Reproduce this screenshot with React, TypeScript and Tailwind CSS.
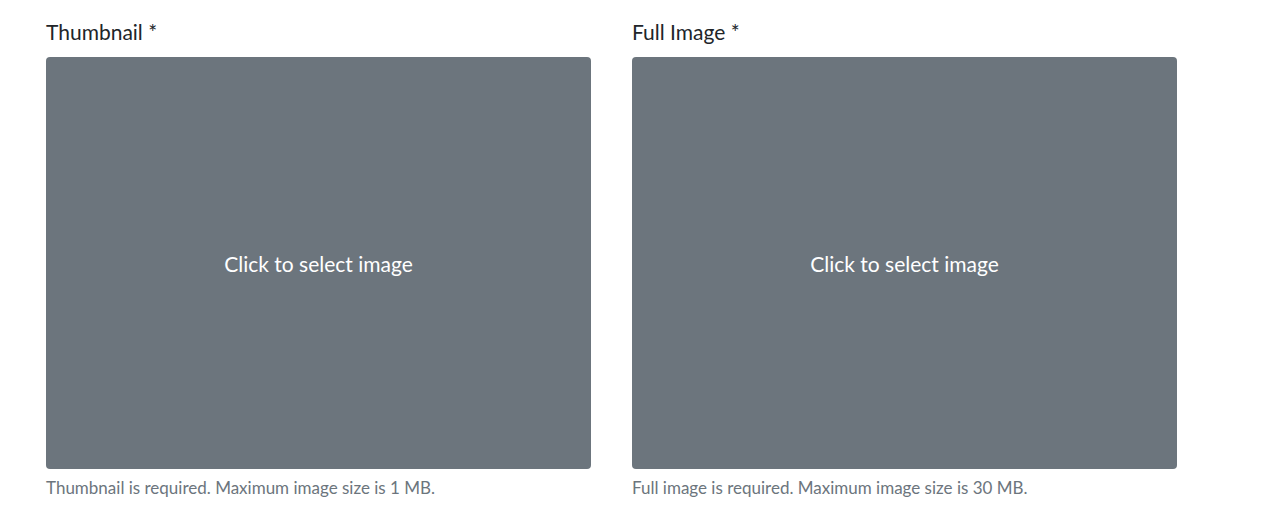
const fields = [
  { label: "Thumbnail *", help: "Thumbnail is required. Maximum image size is 1 MB." },
  { label: "Full Image *", help: "Full image is required. Maximum image size is 30 MB." },
];

export default function App() {
  return (
    <div className="min-h-[524px] bg-white pl-[46px] pt-[19px] font-['Lato',sans-serif]">
      <div className="flex gap-[41px]">
        {fields.map((f) => (
          <div key={f.label} className="w-[545px]">
            <label className="block h-[38px] text-[21px] leading-[25px] text-[#212529]">{f.label}</label>
            <button className="flex h-[412px] w-full items-center justify-center rounded-[4px] bg-[#6c757d] pt-[2px] text-[21px] text-white">
              Click to select image
            </button>
            <p className="mt-[8px] text-[17px] leading-[21px] text-[#6c757d]">{f.help}</p>
          </div>
        ))}
      </div>
    </div>
  );
}
